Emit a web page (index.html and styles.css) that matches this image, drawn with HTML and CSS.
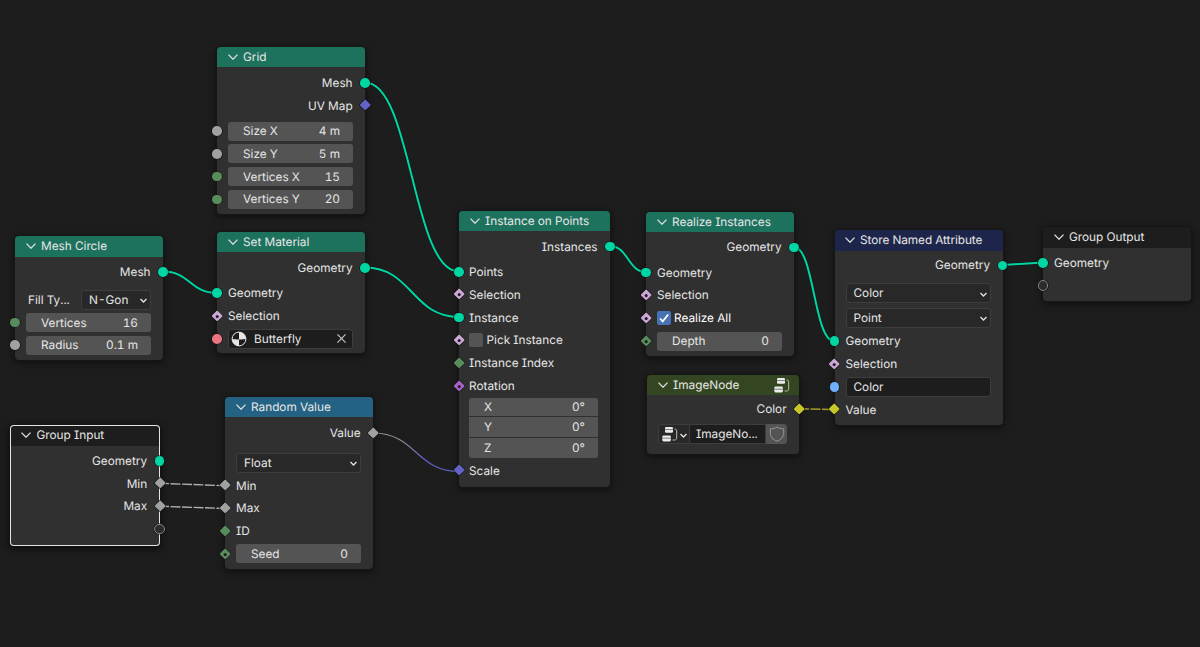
FILE: index.html
```html
<!DOCTYPE html>
<html lang="en">
<head>
<meta charset="utf-8">
<title>Geometry Nodes</title>
<link rel="stylesheet" href="styles.css">
</head>
<body>
<svg class="defs" aria-hidden="true">
  <symbol id="caret" viewBox="0 0 10 6"><path d="M.5.6 5 5.2 9.5.6"/></symbol>
  <symbol id="drop" viewBox="0 0 7 5"><path d="M.5.9 3.5 3.9 6.5.9"/></symbol>
  <symbol id="tree" viewBox="0 0 16 15"><g class="solid"><rect x="3" y="0" width="8" height="5.8" rx="1.3"/><rect x=".3" y="8.6" width="8.6" height="5.8" rx="1.3"/></g><path class="slit" d="M3 2.6h8M.3 11.2h8.6"/><path d="M12.6 2.1h.4c1.2 0 1.7.7 1.7 1.9v7c0 1.3-.8 2-2 2H10.6"/></symbol>
</svg>
<main class="canvas">
  <svg class="wires" viewBox="0 0 1200 647">
    <defs><linearGradient id="fade" gradientUnits="userSpaceOnUse" x1="373" y1="0" x2="459" y2="0"><stop offset="0" stop-color="#a1a1a1"/><stop offset=".35" stop-color="#8c8c96"/><stop offset=".6" stop-color="#6363c7"/></linearGradient></defs>
    <g class="edge"><path d="M365 82.5C412 82.5 412 271.5 459 271.5"/><path d="M163 271.5C190 271.5 190 293 217 293"/><path d="M365 267.5C412 267.5 412 317 459 317"/><path d="M610 246C628 246 628 272 646 272"/><path d="M794 247C814 247 814 341 834 341"/><path d="M1003 265 1043 262.5"/></g>
    <g class="wire"><path d="M365 82.5C412 82.5 412 271.5 459 271.5"/><path d="M163 271.5C190 271.5 190 293 217 293"/><path d="M365 267.5C412 267.5 412 317 459 317"/><path d="M610 246C628 246 628 272 646 272"/><path d="M794 247C814 247 814 341 834 341"/><path d="M1003 265 1043 262.5"/></g>
    <g class="field-wire"><path d="M159 483.3 225 485.7"/><path d="M159 506.2 225 508.5"/><path class="fade" d="M373 433C416 433 416 471.5 459 471.5"/><path class="yellow" d="M799 408.7 834 409.5"/></g>
  </svg>

  <section class="node grid geo">
    <header><svg class="caret"><use href="#caret"/></svg>Grid</header>
    <div class="row out">Mesh<i class="dot right mint"></i></div>
    <div class="row out">UV Map<i class="dia right violet"></i></div>
    <div class="row g3"><i class="dot left gray"></i><div class="num"><span>Size X</span><span>4 m</span></div></div>
    <div class="row"><i class="dot left gray"></i><div class="num"><span>Size Y</span><span>5 m</span></div></div>
    <div class="row"><i class="dot left green"></i><div class="num"><span>Vertices X</span><span>15</span></div></div>
    <div class="row"><i class="dot left green"></i><div class="num"><span>Vertices Y</span><span>20</span></div></div>
  </section>

  <section class="node circle geo">
    <header><svg class="caret"><use href="#caret"/></svg>Mesh Circle</header>
    <div class="row out">Mesh<i class="dot right mint"></i></div>
    <div class="row g5 split"><span>Fill Ty...</span><div class="select"><span>N-Gon</span><svg class="drop"><use href="#drop"/></svg></div></div>
    <div class="row"><i class="dot left green"></i><div class="num"><span>Vertices</span><span>16</span></div></div>
    <div class="row"><i class="dot left gray"></i><div class="num"><span>Radius</span><span>0.1 m</span></div></div>
  </section>

  <section class="node material geo">
    <header><svg class="caret"><use href="#caret"/></svg>Set Material</header>
    <div class="row out">Geometry<i class="dot right mint"></i></div>
    <div class="row g3"><i class="dot left mint"></i>Geometry</div>
    <div class="row"><i class="dia left pink hole"></i>Selection</div>
    <div class="row"><i class="dot left red"></i><div class="text pick"><svg class="ball" viewBox="0 0 16 16"><circle cx="8" cy="8" r="6.9"/><path d="M8 8.4V1.1A6.9 6.9 0 0 0 1.1 8Q4 8.6 8 8.4Z M8 8.4Q11.500 8.600 14.900 8A6.900 6.900 0 0 1 8 14.900Z"/></svg><span>Butterfly</span><svg class="cross" viewBox="0 0 10 10"><path d="M.5.5 9.5 9.5M9.5.5.5 9.5"/></svg></div></div>
  </section>

  <section class="node input io selected">
    <header><svg class="caret"><use href="#caret"/></svg>Group Input</header>
    <div class="row out">Geometry<i class="dot right mint"></i></div>
    <div class="row out">Min<i class="dia right gray"></i></div>
    <div class="row out">Max<i class="dia right gray"></i></div>
    <div class="row out"><i class="dot right empty"></i></div>
  </section>

  <section class="node random">
    <header><svg class="caret"><use href="#caret"/></svg>Random Value</header>
    <div class="row out">Value<i class="dia right gray"></i></div>
    <div class="row g7"><div class="select"><span>Float</span><svg class="drop"><use href="#drop"/></svg></div></div>
    <div class="row"><i class="dia left gray"></i>Min</div>
    <div class="row"><i class="dia left gray"></i>Max</div>
    <div class="row"><i class="dia left green"></i>ID</div>
    <div class="row"><i class="dia left green hole"></i><div class="num"><span>Seed</span><span>0</span></div></div>
  </section>

  <section class="node instance geo">
    <header><svg class="caret"><use href="#caret"/></svg>Instance on Points</header>
    <div class="row out">Instances<i class="dot right mint"></i></div>
    <div class="row g3"><i class="dot left mint"></i>Points</div>
    <div class="row"><i class="dia left pink hole"></i>Selection</div>
    <div class="row"><i class="dot left mint"></i>Instance</div>
    <div class="row"><i class="dia left pink hole"></i><b class="check"></b>Pick Instance</div>
    <div class="row"><i class="dia left green"></i>Instance Index</div>
    <div class="row"><i class="dia left purple hole"></i>Rotation</div>
    <div class="vector"><div class="num"><span>X</span><span>0°</span></div><div class="num"><span>Y</span><span>0°</span></div><div class="num"><span>Z</span><span>0°</span></div></div>
    <div class="row"><i class="dia left violet"></i>Scale</div>
  </section>

  <section class="node realize geo">
    <header><svg class="caret"><use href="#caret"/></svg>Realize Instances</header>
    <div class="row out">Geometry<i class="dot right mint"></i></div>
    <div class="row g3"><i class="dot left mint"></i>Geometry</div>
    <div class="row"><i class="dia left pink hole"></i>Selection</div>
    <div class="row bright"><i class="dia left pink hole"></i><b class="check on"><svg viewBox="0 0 14 14"><path d="M3 7.5 5.7 10.3 11.2 3.5"/></svg></b>Realize All</div>
    <div class="row"><i class="dia left green hole"></i><div class="num"><span>Depth</span><span>0</span></div></div>
  </section>

  <section class="node image">
    <header><svg class="caret"><use href="#caret"/></svg>ImageNode<svg class="tree"><use href="#tree"/></svg></header>
    <div class="row out">Color<i class="dia right yellow"></i></div>
    <div class="row g3 group"><div class="browse"><svg class="tree"><use href="#tree"/></svg><svg class="drop"><use href="#drop"/></svg></div><div class="name">ImageNo...</div><div class="fake"><svg viewBox="0 0 16 16"><path d="M8 1C6 2.3 4 2.8 1.3 2.8V7C1.3 11 4 13.7 8 15.2 12 13.7 14.7 11 14.7 7V2.8C12 2.8 10 2.3 8 1Z"/></svg></div></div>
  </section>

  <section class="node store">
    <header><svg class="caret"><use href="#caret"/></svg>Store Named Attribute</header>
    <div class="row out">Geometry<i class="dot right mint"></i></div>
    <div class="row g5"><div class="select"><span>Color</span><svg class="drop"><use href="#drop"/></svg></div></div>
    <div class="row g2"><div class="select"><span>Point</span><svg class="drop"><use href="#drop"/></svg></div></div>
    <div class="row g1"><i class="dot left mint"></i>Geometry</div>
    <div class="row"><i class="dia left pink hole"></i>Selection</div>
    <div class="row"><i class="dot left blue"></i><div class="text"><span>Color</span></div></div>
    <div class="row"><i class="dia left yellow"></i>Value</div>
  </section>

  <section class="node output io">
    <header><svg class="caret"><use href="#caret"/></svg>Group Output</header>
    <div class="row"><i class="dot left mint"></i>Geometry</div>
    <div class="row"><i class="dot left empty"></i></div>
  </section>
</main>
</body>
</html>
```
FILE: styles.css
```css
* { box-sizing: border-box; }
body { margin: 0; background: #1d1d1d; overflow: hidden; }
svg { display: block; fill: none; overflow: visible; flex: none; }
.defs { position: absolute; width: 0; height: 0; }

.canvas {
  position: relative;
  width: 1200px;
  height: 647px;
  font: 400 11.8px/20px Inter, sans-serif;
  font-feature-settings: "cv08", "tnum";
  text-rendering: geometricPrecision;
  color: #e6e6e6;
  white-space: nowrap;
}

.wires { position: absolute; left: 0; top: 0; width: 1200px; height: 647px; }
.edge { stroke: #151515; stroke-width: 3.2; }
.wire { stroke: #00d6a3; stroke-width: 2; }
.field-wire { stroke: #b0b0ac; stroke-width: 1.4; stroke-dasharray: 10 1.5; }
.field-wire .fade { stroke: url(#fade); stroke-width: 1.2; stroke-dasharray: none; }
.field-wire .yellow { stroke: #a89a2a; }

.node {
  position: absolute;
  display: flex;
  flex-direction: column;
  background: #303030;
  border-radius: 4px;
  box-shadow: 0 0 0 1px #161616, 0 2px 6px 1px rgba(0, 0, 0, .5);
}
.node header {
  display: flex;
  align-items: center;
  flex: none;
  height: 20px;
  margin-bottom: 4.6px;
  padding-left: 11px;
  border-radius: 4px 4px 0 0;
  background: #303030;
}
.caret { width: 10px; height: 6px; margin-right: 5px; stroke: #e0e0e0; stroke-width: 1.3; }
.geo header { background: #1d725e; }
.io header { background: #1d1d1d; }
.random header { background: #246283; }
.image header { background: #344621; }
.store header { background: #1e254a; }

.grid { left: 217px; top: 47px; width: 148px; height: 167px; }
.circle { left: 15px; top: 236px; width: 148px; height: 124px; }
.material { left: 217px; top: 232px; width: 148px; height: 121px; }
.input { left: 10px; top: 424.500px; width: 149.500px; height: 121px; }
.random { left: 225px; top: 397.400px; width: 148px; height: 171.600px; }
.instance { left: 459px; top: 211px; width: 151px; height: 276px; }
.realize { left: 646px; top: 212px; width: 148px; height: 144px; }
.image { left: 647px; top: 375px; width: 152px; height: 79px; }
.store { left: 834.5px; top: 230px; width: 168px; height: 195px; }
.output { left: 1043px; top: 227px; width: 148px; height: 74px; }
.selected {
  background: linear-gradient(#1d1d1d 21px, #303030 21px);
  box-shadow: inset 0 0 0 1px #e4e4e4, 0 2px 6px 2px rgba(0, 0, 0, .5);
}
.selected header { background: none; }
.selected .caret { margin-right: 5.500px; }
.circle header, .input header, .store header, .output header { height: 21px; padding-bottom: 1px; margin-bottom: 3.6px; }
.random header { margin-bottom: 4.200px; }
.input header { margin-bottom: 4px; }
.instance header { margin-bottom: 4.4px; }
.realize header { margin-bottom: 4px; }
.image header { margin-bottom: 2.5px; }
.store header { margin-bottom: 3px; padding-left: 10.5px; letter-spacing: -.05px; }

.row {
  position: relative;
  display: flex;
  align-items: center;
  flex: none;
  height: 22.8px;
  padding: 0 12px 0 11px;
}
.instance .row { padding-left: 10px; }
.out { justify-content: flex-end; }
.out { padding-right: 12.400px; }
.g1 { margin-top: .6px; }
.g2 { margin-top: 2px; }
.g3 { margin-top: 2.5px; }
.g5 { margin-top: 5px; }
.g7 { margin-top: 7px; }
.bright { color: #fff; }

.num, .select, .text {
  display: flex;
  align-items: center;
  justify-content: space-between;
  flex: 1;
  height: 19px;
  border-radius: 3px;
}
.num { padding: 0 13px 0 15px; background: #545454; }
.select { height: 20px; padding: 0 3px 0 7px; background: #282828; border: 1px solid #3d3d3d; }
.text { height: 20px; padding: 0 7px; background: #1d1d1d; border: 1px solid #3d3d3d; }
.drop { width: 7px; height: 5px; stroke: #e0e0e0; stroke-width: 1.4; margin-top: 2px; }
.split { padding-left: 13px; justify-content: space-between; }
.split .select { flex: none; width: 70px; }
.pick { padding: 0 6px 0 2px; }
.pick span { flex: 1; margin-left: 7px; }
.ball { width: 16px; height: 16px; stroke: #e6e6e6; }
.ball path { fill: #e6e6e6; stroke: none; }
.ball { transform: scaleX(-1); }
.cross { width: 9px; height: 9px; stroke: #c8c8c8; stroke-width: 1.3; }

.vector {
  display: grid;
  grid-template-rows: 18px 20px 20px;
  gap: 1px;
  margin: 1px 12px 1px 10px;
  border-radius: 3px;
  overflow: hidden;
}
.vector .num { height: auto; border-radius: 0; }

.check { width: 14px; height: 14px; margin-right: 3.5px; border-radius: 2px; background: #545454; }
.check.on { background: #4772b3; margin-right: 3px; }
.check path { stroke: #fff; stroke-width: 1.8; }

/* Sockets sit across the node's edge. */
.dot, .dia { position: absolute; top: 50%; box-shadow: 0 0 0 .6px #151515; }
.dot { width: 9.6px; height: 9.6px; margin: -4.9px; border-radius: 50%; }
.dia { width: 8.4px; height: 8.4px; margin: -4.4px; border-radius: 1px; transform: rotate(45deg); }
.left { left: 0; }
.right { right: 0; }
.mint { background: #00d6a3; }
.gray { background: #a1a1a1; }
.green { background: #598c5c; }
.violet { background: #6363c7; }
.purple { background: #a663c7; }
.pink { background: #cca6d6; }
.red { background: #ed7582; }
.blue { background: #70b2ff; }
.yellow.dia { background: #c7c729; }
.empty { width: 10.4px; height: 10.4px; margin: -5.3px; background: #2c2c2c; border: 1px solid #858585; }
.hole::after { content: ""; position: absolute; inset: 2.9px; border-radius: 50%; background: #1c1c1c; }

.tree { width: 16px; height: 15px; stroke: #b5c0a9; }
.solid { fill: #ececec; stroke: none; }
.slit { stroke: #4a4f44; stroke-width: .7; }
header .tree { margin-left: auto; margin-right: 9px; }
.browse, .name, .fake { display: flex; align-items: center; height: 20px; border: 1px solid #3d3d3d; }
.browse { width: 32px; padding-left: 3px; gap: 2px; background: #282828; border-radius: 3px 0 0 3px; }
.name { flex: 1; padding-left: 6px; background: #1d1d1d; border-left: 0; }
.fake { width: 21px; justify-content: center; background: #545454; border-color: #545454; border-radius: 0 3px 3px 0; }
.fake svg { width: 16px; height: 16px; stroke: #999; }
```
